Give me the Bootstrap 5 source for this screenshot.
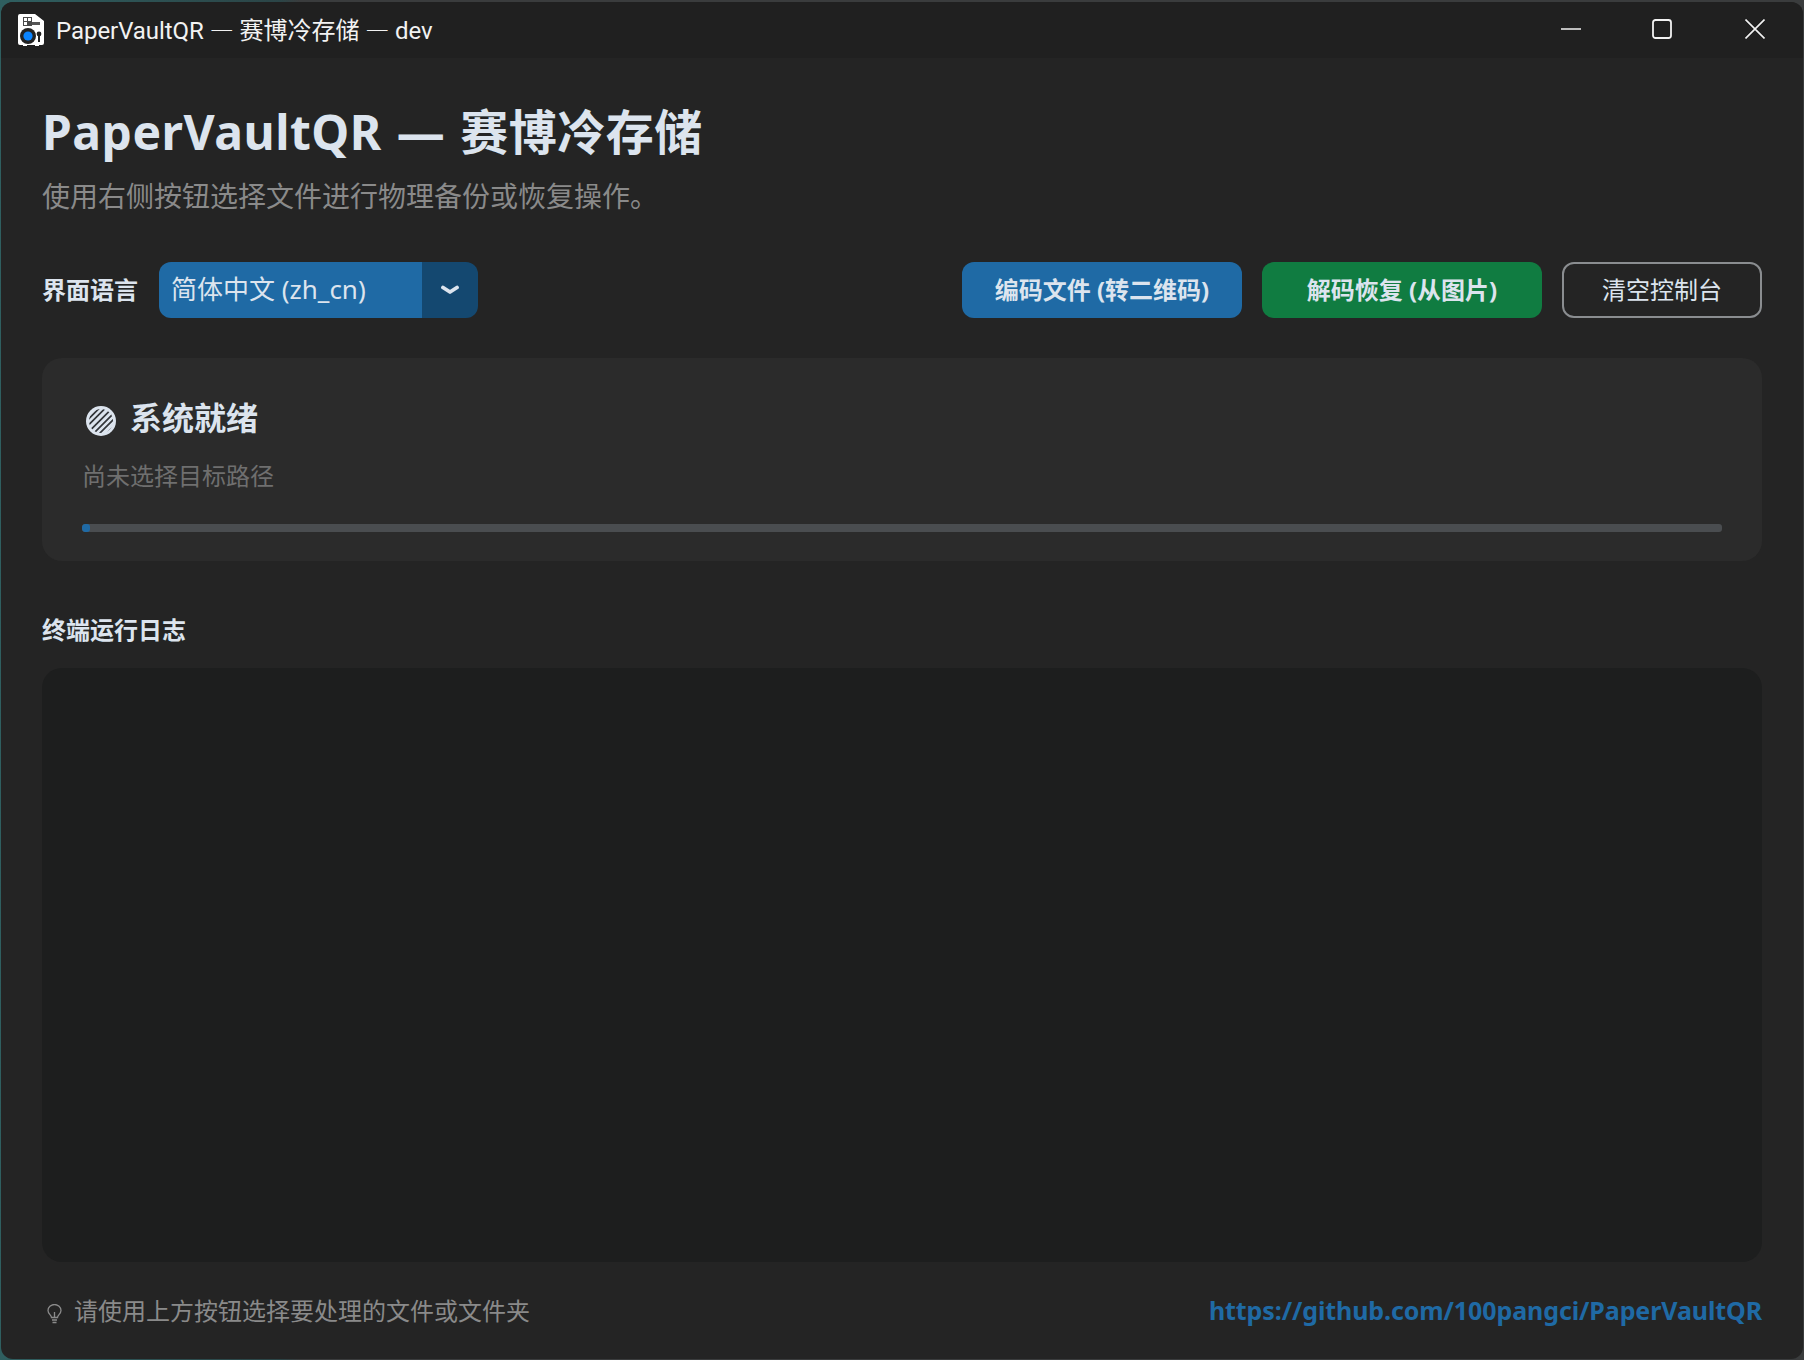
<!DOCTYPE html>
<html lang="zh-CN">
<head>
    <meta charset="UTF-8">
    <meta name="viewport" content="width=device-width, initial-scale=1.0">
    <title>PaperVaultQR</title>
    <link href="https://cdn.jsdelivr.net/npm/bootstrap@5.3.0/dist/css/bootstrap.min.css" rel="stylesheet">
    <style>
        html, body {
            height: 100%;
        }
        body {
            background: linear-gradient(90deg, #2f5f60 0, #2b4547 280px, #3a3c3d 300px, #3a3c3d 100%);
            padding: 2px 1px 1px 1px;
            font-family: "Noto Sans", "Noto Sans CJK SC", sans-serif;
            color: #dce4ee;
        }
        .app-window {
            height: 100%;
            background-color: #242424;
            border-radius: 12px;
            overflow: hidden;
        }
        /* barra de titulo */
        .title-bar {
            height: 56px;
            background-color: #202020;
            padding-left: 17px;
            color: #f2f2f2;
            font-size: 24px;
            font-family: Roboto, "Noto Sans CJK SC", sans-serif;
        }
        .title-bar .win-name {
            margin-left: 12px;
            letter-spacing: -0.05px;
        }
        .win-dash {
            font-family: "Noto Sans CJK SC", sans-serif;
        }
        .win-ctrl {
            width: 20px;
            height: 20px;
            margin-left: 73px;
            display: block;
        }
        .win-ctrl-max {
            margin-left: 71px;
        }
        .win-ctrls {
            padding-right: 38px;
            padding-bottom: 2px;
        }
        .app-body {
            padding: 45px 41px 0 41px;
        }
        .main-title {
            font-size: 48px;
            line-height: 58px;
            font-weight: 700;
            letter-spacing: 0.5px;
            word-spacing: 2px;
            margin: 0 0 17px 0;
            color: #dce4ee;
        }
        .sub-title {
            font-size: 28px;
            line-height: 36px;
            color: #8a8a8a;
            margin-bottom: 48px;
        }
        .field-label {
            font-size: 24px;
            font-weight: 700;
            margin-right: 21px;
        }
        .lang-menu {
            width: 320px;
            height: 56px;
        }
        .lang-menu .btn {
            border: 0;
            color: #dce4ee;
            font-size: 26px;
            line-height: 1;
            border-radius: 12px;
            display: flex;
            align-items: center;
        }
        .lang-menu .lang-value {
            width: 264px;
            flex: none;
            background-color: #1f6aa5;
            padding: 0 0 2px 12px;
        }
        .lang-menu .lang-arrow {
            width: 56px;
            flex: none;
            background-color: #144870;
            justify-content: center;
            padding: 0;
        }
        .action-row {
            gap: 20px;
        }
        .action-btn {
            height: 56px;
            border-radius: 12px;
            font-size: 24px;
            font-weight: 700;
            color: #dce4ee;
            border: 0;
            padding: 0;
            display: flex;
            align-items: center;
            justify-content: center;
        }
        .action-encode {
            width: 280px;
            background-color: #1f6aa5;
        }
        .action-decode {
            width: 280px;
            background-color: #107c41;
        }
        .action-clear {
            width: 200px;
            background-color: transparent;
            border: 2px solid #8a8d90;
            font-weight: 400;
        }
        .status-box {
            background-color: #2b2b2b;
            border: 0;
            border-radius: 20px;
            margin-top: 40px;
            padding: 38px 40px 29px 40px;
            color: #dce4ee;
        }
        .status-head {
            font-size: 32px;
            line-height: 44px;
            font-weight: 700;
            padding-left: 4px;
        }
        .status-head svg {
            margin-right: 14px;
            margin-top: 6px;
        }
        .status-path {
            font-size: 24px;
            line-height: 32px;
            color: #6f6f6f;
            margin-top: 20px;
            margin-bottom: 32px;
        }
        .status-box .progress {
            height: 8px;
            background-color: #4a4d50;
            border-radius: 3px;
        }
        .status-box .progress-bar {
            background-color: #1f6aa5;
            border-radius: 3px;
        }
        .log-title {
            font-size: 24px;
            line-height: 34px;
            font-weight: 700;
            margin-top: 52px;
            margin-bottom: 21px;
        }
        .log-box {
            background-color: #1d1e1e;
            border-radius: 20px;
            min-height: 0;
        }
        .foot-line {
            height: 97px;
            flex: none;
        }
        .foot-hint {
            font-size: 24px;
            color: #8a8a8a;
        }
        .foot-hint svg {
            margin: 6px 12px 0 5px;
        }
        .foot-link {
            font-size: 25px;
            font-weight: 700;
            letter-spacing: -0.1px;
            color: #1f6aa5;
            text-decoration: none;
        }
    </style>
</head>
<body>
    <div class="app-window d-flex flex-column">
        <!-- barra de titulo -->
        <div class="title-bar d-flex align-items-center flex-shrink-0">
            <svg width="26" height="32" viewBox="0 0 26 32">
                <path d="M2 0H17L26 7V29a2 2 0 0 1-2 2H21V32H17V31H9V32H5V31H2a2 2 0 0 1-2-2V2A2 2 0 0 1 2 0Z" fill="#fff"/>
                <rect x="5" y="3" width="9" height="9" fill="#4a4a4a"/>
                <rect x="6" y="4" width="3" height="3" fill="#fff"/>
                <rect x="10" y="4" width="3" height="3" fill="#fff"/>
                <rect x="6" y="8" width="3" height="3" fill="#fff"/>
                <rect x="14" y="8" width="8" height="3" fill="#555"/>
                <circle cx="10" cy="22" r="8" fill="#222"/>
                <circle cx="10" cy="22" r="4.6" fill="#0a84ff"/>
                <circle cx="21" cy="20" r="2.4" fill="#222"/>
                <rect x="20" y="20" width="2" height="8" fill="#222"/>
            </svg>
            <span class="win-name">PaperVaultQR <span class="win-dash">—</span> 赛博冷存储 <span class="win-dash">—</span> dev</span>
            <div class="win-ctrls d-flex align-items-center ms-auto">
                <svg class="win-ctrl" viewBox="0 0 20 20"><path d="M0 10H20" stroke="#f2f2f2" stroke-width="1.6"/></svg>
                <svg class="win-ctrl win-ctrl-max" viewBox="0 0 20 20"><rect x="1" y="1" width="18" height="18" rx="2.5" fill="none" stroke="#f2f2f2" stroke-width="1.8"/></svg>
                <svg class="win-ctrl" viewBox="0 0 20 20"><path d="M0.5 0.5L19.5 19.5M19.5 0.5L0.5 19.5" stroke="#f2f2f2" stroke-width="1.6"/></svg>
            </div>
        </div>

        <div class="app-body d-flex flex-column flex-grow-1">
            <h1 class="main-title">PaperVaultQR — 赛博冷存储</h1>
            <div class="sub-title">使用右侧按钮选择文件进行物理备份或恢复操作。</div>

            <!-- idioma e botoes -->
            <div class="d-flex align-items-center">
                <span class="field-label">界面语言</span>
                <div class="btn-group lang-menu">
                    <button type="button" class="btn lang-value">简体中文 (zh_cn)</button>
                    <button type="button" class="btn lang-arrow" aria-label="展开">
                        <svg width="20" height="10" viewBox="0 0 20 10"><path d="M3 2.500L10 7L17 2.500" fill="none" stroke="#dce4ee" stroke-width="3.8" stroke-linecap="round" stroke-linejoin="round"/></svg>
                    </button>
                </div>
                <div class="d-flex ms-auto action-row">
                    <button type="button" class="btn action-btn action-encode">编码文件 (转二维码)</button>
                    <button type="button" class="btn action-btn action-decode">解码恢复 (从图片)</button>
                    <button type="button" class="btn action-btn action-clear">清空控制台</button>
                </div>
            </div>

            <!-- status -->
            <div class="card status-box">
                <div class="status-head d-flex align-items-center">
                    <svg width="30" height="30" viewBox="0 0 30 30">
                        <defs>
                            <clipPath id="discoClip"><circle cx="15" cy="15" r="12"/></clipPath>
                        </defs>
                        <circle cx="15" cy="15" r="15" fill="#dce4ee"/>
                        <g clip-path="url(#discoClip)" stroke="#33363a" stroke-width="1.7">
                            <path d="M-6 15L15 -6M-3 18.500L18.500 -3M-1 22.500L22.500 -1M2 26.500L26.500 2M5 30L30 5M8 33L33 8M11.500 36.500L36.500 11.500"/>
                        </g>
                    </svg>
                    <span>系统就绪</span>
                </div>
                <div class="status-path">尚未选择目标路径</div>
                <div class="progress">
                    <div class="progress-bar" style="width: 0.5%"></div>
                </div>
            </div>

            <div class="log-title">终端运行日志</div>
            <div class="log-box flex-grow-1"></div>

            <div class="foot-line d-flex align-items-center justify-content-between">
                <div class="foot-hint d-flex align-items-center">
                    <svg width="15" height="20" viewBox="0 0 15 20" fill="none" stroke="#8a8a8a" stroke-width="1.3">
                        <path d="M4.500 13.500C4.500 11 1 10 1 6.500a6.500 6 0 0 1 13 0C14 10 10.500 11 10.500 13.500Z"/>
                        <path d="M5 16H10M5.500 18.500H9.500"/>
                        <path d="M7.500 13V8"/>
                    </svg>
                    <span>请使用上方按钮选择要处理的文件或文件夹</span>
                </div>
                <a class="foot-link" href="#">https://github.com/100pangci/PaperVaultQR</a>
            </div>
        </div>
    </div>
    <script src="https://cdn.jsdelivr.net/npm/bootstrap@5.3.0/dist/js/bootstrap.bundle.min.js"></script>
</body>
</html>
